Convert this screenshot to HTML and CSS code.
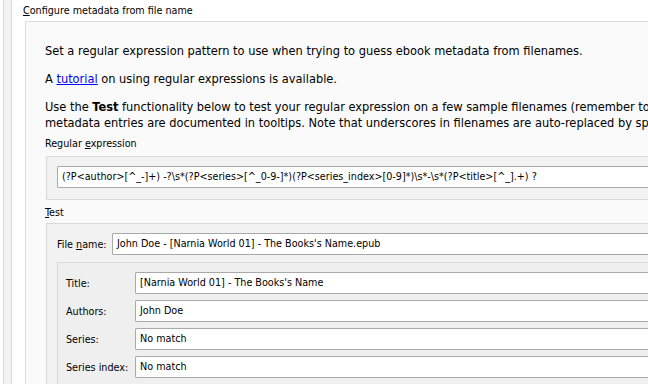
FILE: index.html
```html
<!DOCTYPE html>
<html lang="en">
<head>
  <meta charset="UTF-8">
  <title>Configure metadata from file name</title>
  <link rel="stylesheet" href="styles.css">
</head>
<body>

<div class="page">
  <!-- left edge of the parent dialog -->
  <div class="edge"></div>

  <div class="content">
    <div class="group-title"><u>C</u>onfigure metadata from file name</div>

    <div class="group main-group">
      <p class="info">Set a regular expression pattern to use when trying to guess ebook metadata from filenames.</p>
      <p class="info">A <a href="#">tutorial</a> on using regular expressions is available.</p>
      <p class="info">
        <span class="line">Use the <b>Test</b> functionality below to test your regular expression on a few sample filenames (remember to include the file extension). The group names for the various</span>
        <span class="line">metadata entries are documented in tooltips. Note that underscores in filenames are auto-replaced by spaces.</span>
      </p>

      <div class="label">Regular <u>e</u>xpression</div>
      <div class="frame regex-frame">
        <div class="input">(?P&lt;author&gt;[^_-]+) -?\s*(?P&lt;series&gt;[^_0-9-]*)(?P&lt;series_index&gt;[0-9]*)\s*-\s*(?P&lt;title&gt;[^_].+) ?</div>
      </div>

      <div class="label test-label"><u>T</u>est</div>
      <div class="frame test-frame">
        <div class="row file-row">
          <span class="row-label file-label">File <u>n</u>ame:</span>
          <div class="input">John Doe - [Narnia World 01] - The Books's Name.epub</div>
        </div>

        <div class="frame results">
          <div class="row">
            <span class="row-label">Title:</span>
            <div class="input">[Narnia World 01] - The Books's Name</div>
          </div>
          <div class="row">
            <span class="row-label">Authors:</span>
            <div class="input">John Doe</div>
          </div>
          <div class="row">
            <span class="row-label">Series:</span>
            <div class="input">No match</div>
          </div>
          <div class="row">
            <span class="row-label">Series index:</span>
            <div class="input">No match</div>
          </div>
          <div class="row">
            <span class="row-label">ISBN:</span>
            <div class="input">No match</div>
          </div>
        </div>
      </div>
    </div>
  </div>
</div>

</body>
</html>
```

FILE: styles.css
```css
html, body {
  margin: 0;
  overflow: hidden;
}

body {
  background: #ffffff;
  font-family: "DejaVu Sans Condensed", "DejaVu Sans", sans-serif;
  font-size: 10.7px;
  color: #000000;
}

.page {
  display: flex;
  width: 800px;
  height: 384px;
}

.edge {
  flex-shrink: 0;
  width: 7px;
  margin-left: 3px;
  border-left: 1px solid #d9d9d9;
  border-right: 1px solid #d9d9d9;
  background: #f3f3f3;
}

.content {
  flex: 1;
  min-width: 0;
  padding-left: 11px;
}

.group-title {
  height: 21px;
  line-height: 22px;
}

.group {
  margin-left: 2px;
  border: 1px solid #dcdcdc;
  border-right: none;
  background: #fafafa;
  padding: 21px 0 0 19px;
  height: 400px;
}

.info {
  margin: 0 0 12px;
  font-size: 12.7px;
  line-height: 16px;
  white-space: nowrap;
}

.info .line {
  display: block;
}

.info a {
  color: #0000ff;
}

.label {
  height: 14px;
  line-height: 14px;
  margin-top: -6px;
}

.test-label {
  margin-top: 6px;
}

.frame {
  border: 1px solid #d9d9d9;
  border-right: none;
  background: #f2f2f2;
}

.regex-frame {
  margin: 5px 0 0 1px;
  padding: 9px 0 11px 10px;
}

.test-frame {
  margin: 3px 0 0 1px;
  padding: 9px 0 0 10px;
}

.input {
  flex: 1;
  height: 20px;
  line-height: 20px;
  padding-left: 4px;
  background: #ffffff;
  border: 1px solid #a9a9a9;
  border-right: none;
  border-radius: 2px 0 0 2px;
  white-space: nowrap;
  overflow: hidden;
}

.row {
  display: flex;
  align-items: center;
  margin-bottom: 6px;
}

.row-label {
  width: 69px;
}

.file-label {
  width: 55px;
}

.file-row {
  margin-bottom: 7px;
}

.results {
  background: #efefef;
  padding: 9px 0 0 8px;
}
```
